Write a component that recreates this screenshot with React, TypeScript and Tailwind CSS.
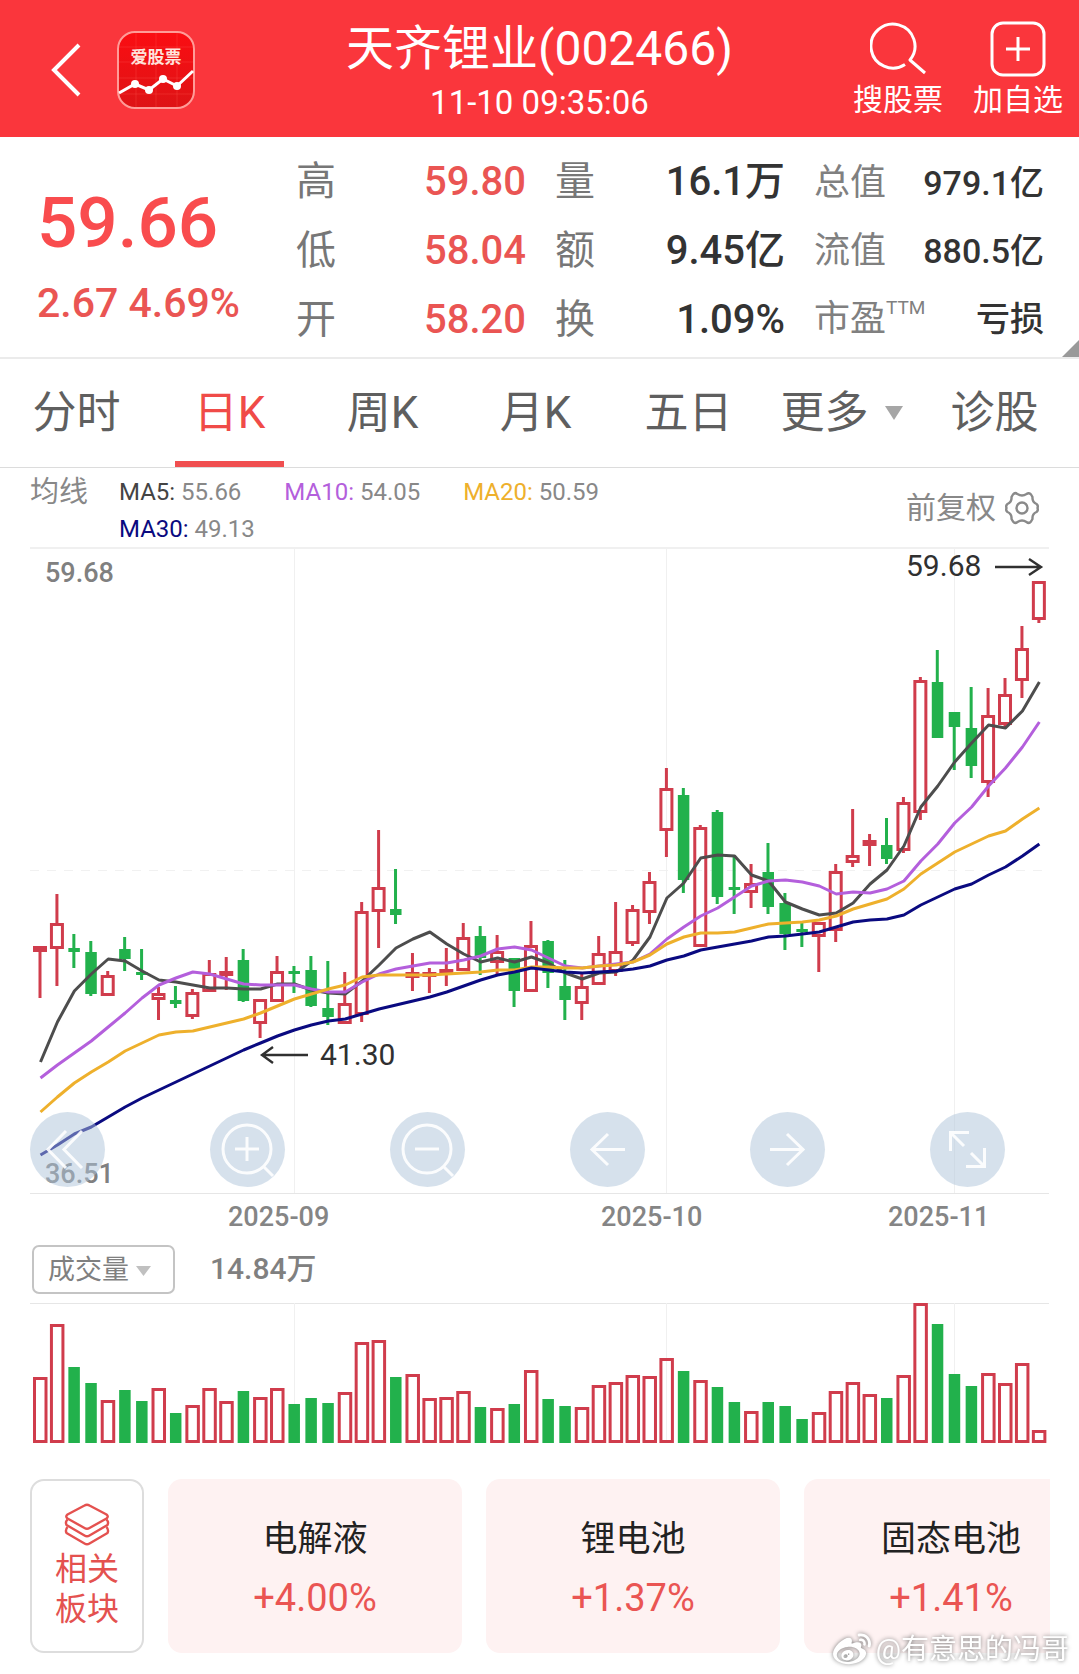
import React from 'react';
import { FaWeibo } from 'react-icons/fa';

interface Candle {
    up: boolean;
    high: number;
    top: number;
    bottom: number;
    low: number;
    volume: number;
}

interface Stat {
    label: string;
    value: string;
    sup?: string;
}

const RED = '#d03c4c';
const GREEN = '#22b14c';
const FIRST_X = 40;
const STEP = 16.93;
const VOLUME_BASE = 1443;

const xAt = (index: number) => FIRST_X + index * STEP;

// up, high, body top, body bottom, low, volume top
const rows: [number, number, number, number, number, number][] = [
    [1, 946, 946, 952, 998, 1377],
    [1, 894, 923, 949, 986, 1324],
    [0, 934, 948, 952, 968, 1367],
    [0, 941, 952, 994, 996, 1383],
    [1, 971, 975, 996, 996, 1400],
    [0, 937, 949, 959, 971, 1390],
    [0, 949, 972, 975, 980, 1401],
    [1, 987, 993, 1000, 1020, 1388],
    [0, 986, 1000, 1004, 1008, 1413],
    [1, 989, 992, 1017, 1019, 1405],
    [1, 960, 973, 992, 992, 1388],
    [1, 957, 971, 976, 990, 1401],
    [0, 949, 960, 1001, 1002, 1391],
    [1, 999, 999, 1024, 1038, 1397],
    [1, 956, 971, 1002, 1002, 1388],
    [0, 966, 971, 974, 993, 1404],
    [0, 956, 970, 1006, 1007, 1398],
    [0, 961, 1008, 1017, 1025, 1403],
    [1, 972, 1003, 1024, 1024, 1392],
    [1, 902, 911, 1015, 1022, 1342],
    [1, 830, 887, 912, 948, 1340],
    [0, 869, 909, 915, 924, 1377],
    [1, 953, 972, 978, 991, 1374],
    [1, 968, 972, 977, 993, 1398],
    [1, 948, 969, 974, 986, 1397],
    [1, 923, 937, 971, 971, 1391],
    [0, 926, 936, 958, 975, 1407],
    [1, 935, 951, 963, 975, 1408],
    [0, 958, 958, 991, 1007, 1404],
    [1, 921, 945, 992, 992, 1370],
    [0, 940, 941, 973, 988, 1399],
    [0, 960, 986, 1000, 1020, 1406],
    [1, 972, 986, 1004, 1020, 1407],
    [1, 936, 953, 985, 985, 1385],
    [1, 902, 951, 972, 976, 1382],
    [1, 905, 909, 944, 946, 1375],
    [1, 872, 881, 913, 924, 1376],
    [1, 768, 788, 831, 857, 1358],
    [0, 788, 795, 880, 893, 1371],
    [1, 825, 827, 947, 947, 1380],
    [0, 810, 812, 897, 904, 1387],
    [0, 857, 887, 890, 914, 1402],
    [1, 864, 883, 893, 908, 1411],
    [0, 843, 872, 907, 914, 1402],
    [0, 893, 903, 934, 950, 1406],
    [0, 922, 929, 932, 947, 1419],
    [1, 922, 922, 937, 972, 1412],
    [1, 864, 871, 931, 942, 1391],
    [1, 809, 855, 863, 867, 1382],
    [1, 834, 840, 846, 866, 1394],
    [0, 818, 845, 859, 864, 1398],
    [1, 797, 802, 851, 853, 1375],
    [1, 677, 680, 813, 820, 1303],
    [0, 650, 682, 738, 738, 1324],
    [0, 712, 712, 727, 770, 1374],
    [0, 687, 728, 766, 778, 1386],
    [1, 688, 715, 783, 797, 1373],
    [1, 678, 694, 725, 727, 1383],
    [1, 626, 648, 681, 698, 1363],
    [1, 581, 581, 620, 623, 1430],
];

const candles: Candle[] = rows.map(([up, high, top, bottom, low, volume]) => ({
    up: up === 1,
    high,
    top,
    bottom,
    low,
    volume,
}));

const averages = [
    {
        color: '#4d4d4d',
        points: [1062, 1022, 991, 974, 959, 961, 971, 980, 982, 985, 988, 988, 989, 989, 984, 984, 990, 993, 994, 981, 965, 948, 939, 932, 944, 954, 962, 958, 962, 957, 963, 973, 979, 973, 972, 960, 937, 898, 883, 858, 855, 856, 875, 881, 902, 909, 915, 913, 903, 884, 870, 846, 807, 786, 762, 743, 725, 728, 711, 682],
    },
    {
        color: '#b45fdc',
        points: [1078, 1065, 1053, 1041, 1027, 1013, 998, 985, 978, 972, 974, 979, 984, 985, 985, 985, 989, 992, 992, 982, 974, 969, 966, 963, 963, 960, 956, 949, 947, 950, 958, 966, 968, 966, 964, 962, 954, 939, 927, 916, 908, 897, 886, 881, 880, 882, 886, 894, 892, 893, 889, 881, 861, 844, 823, 807, 786, 768, 747, 722],
    },
    {
        color: '#eeb02c',
        points: [1112, 1097, 1083, 1072, 1062, 1051, 1043, 1035, 1032, 1031, 1027, 1023, 1019, 1013, 1006, 999, 994, 989, 985, 977, 975, 975, 975, 975, 974, 973, 972, 970, 970, 967, 967, 968, 968, 966, 965, 962, 955, 944, 937, 933, 933, 932, 928, 924, 923, 922, 920, 916, 909, 904, 899, 889, 874, 863, 852, 844, 836, 831, 819, 808],
    },
    {
        color: '#0a0a80',
        points: [1155, 1145, 1134, 1127, 1117, 1107, 1098, 1090, 1082, 1074, 1066, 1058, 1050, 1043, 1036, 1030, 1025, 1021, 1019, 1014, 1009, 1005, 1001, 997, 992, 986, 980, 975, 972, 968, 970, 972, 973, 972, 971, 969, 966, 960, 956, 950, 947, 944, 941, 937, 936, 934, 932, 927, 922, 920, 919, 915, 905, 897, 889, 884, 875, 867, 856, 844],
    },
];

const months = [
    { label: '2025-09', line: 294, x: 228 },
    { label: '2025-10', line: 666, x: 601 },
    { label: '2025-11', line: 954, x: 888 },
];

const priceStats: Stat[] = [
    { label: '高', value: '59.80' },
    { label: '低', value: '58.04' },
    { label: '开', value: '58.20' },
];

const tradeStats: Stat[] = [
    { label: '量', value: '16.1万' },
    { label: '额', value: '9.45亿' },
    { label: '换', value: '1.09%' },
];

const valueStats: Stat[] = [
    { label: '总值', value: '979.1亿' },
    { label: '流值', value: '880.5亿' },
    { label: '市盈', value: '亏损', sup: 'TTM' },
];

const tabs = ['分时', '日K', '周K', '月K', '五日', '更多', '诊股'];

const legend = [
    { name: 'MA5:', value: '55.66', color: 'text-[#444444]' },
    { name: 'MA10:', value: '54.05', color: 'text-[#b45fdc]' },
    { name: 'MA20:', value: '50.59', color: 'text-[#eeb02c]' },
    { name: 'MA30:', value: '49.13', color: 'text-[#0a0a80]' },
];

const tools = [
    { label: '更早', path: 'M36 19 18 37.5 36 56M52 19 34 37.5 52 56' },
    { label: '放大', path: 'M61 37A24 24 0 1 1 13 37A24 24 0 1 1 61 37ZM37 25V49M25 37H49M53 54 63 64' },
    { label: '缩小', path: 'M61 37A24 24 0 1 1 13 37A24 24 0 1 1 61 37ZM25 37H49M53 54 63 64' },
    { label: '左移', path: 'M38 22 22 37.5 38 53M22 37.5H55' },
    { label: '右移', path: 'M37 22 53 37.5 37 53M20 37.5H53' },
    { label: '全屏', path: 'M39 20.5H20.5V39M20.5 20.5 34 34M36 54.5H54.5V36M54.5 54.5 41 41' },
];

const sectors = [
    { name: '电解液', change: '+4.00%' },
    { name: '锂电池', change: '+1.37%' },
    { name: '固态电池', change: '+1.41%' },
];

const Header: React.FC = () => (
    <header className="h-[137px] bg-[#fa363c] text-white grid grid-cols-[1fr_auto_1fr]">
        <div className="flex items-center pt-[2px] pl-[46px] gap-[30px]">
            <button aria-label="返回">
                <svg width="40" height="56" viewBox="0 0 40 56" fill="none" stroke="currentColor" strokeWidth="4">
                    <path d="M33 3 8 28 33 53" />
                </svg>
            </button>
            <svg width="80" height="80" viewBox="0 0 80 80" role="img" aria-label="爱股票">
                <defs>
                    <linearGradient id="logo" x1="0" y1="0" x2="0" y2="1">
                        <stop offset="0" stopColor="#fb0d12" />
                        <stop offset="1" stopColor="#dd1416" />
                    </linearGradient>
                </defs>
                <rect x="2" y="2" width="76" height="76" rx="17" fill="url(#logo)" />
                <path d="M20 3V77M40 3V77M61 3V77M3 17H77M3 32H77M3 48H77M3 64H77" stroke="#ff5a50" strokeOpacity=".3" />
                <rect x="2" y="2" width="76" height="76" rx="17" fill="none" stroke="#ff9c98" strokeWidth="2" />
                <text x="40" y="33" textAnchor="middle" fontSize="17" fontWeight="700" fill="#ffe3dc">爱股票</text>
                <path d="M3 63 19 54 33 60 47 49 61 56 77 41" fill="none" stroke="#fff" strokeWidth="3" />
                <g fill="#fff">
                    <circle cx="19" cy="54" r="4" />
                    <circle cx="33" cy="60" r="4" />
                    <circle cx="47" cy="49" r="4" />
                    <circle cx="61" cy="56" r="4" />
                </g>
            </svg>
        </div>
        <div className="text-center pt-[18px]">
            <h1 className="text-[48px] leading-[61px]">天齐锂业(002466)</h1>
            <p className="text-[33px] leading-[47px]">11-10 09:35:06</p>
        </div>
        <div className="flex justify-end gap-[30px] pr-[16px] pt-[21px] text-[30px] leading-[40px]">
            <button className="flex flex-col items-center gap-[3px]">
                <svg width="56" height="56" viewBox="0 0 56 56" fill="none" stroke="currentColor" strokeWidth="3">
                    <path d="M35 43.500A22 22 0 1 1 40 39L55 52" strokeLinejoin="round" />
                </svg>
                搜股票
            </button>
            <button className="flex flex-col items-center gap-[3px]">
                <svg width="56" height="56" viewBox="0 0 56 56" fill="none" stroke="currentColor" strokeWidth="3">
                    <rect x="2" y="2" width="52" height="52" rx="11" />
                    <path d="M28 16V40M16 28H40" />
                </svg>
                加自选
            </button>
        </div>
    </header>
);

const Quote: React.FC = () => (
    <section className="relative h-[222px] border-b-2 border-[#ebebeb] pl-[37px] pr-[35px] flex justify-between">
        <div className="w-[230px] pt-[46px] text-[#f94c4e] font-medium">
            <div className="text-[71px] leading-[80px]">59.66</div>
            <div className="text-[41px] leading-[48px] pt-[16px] text-[#ea5553] whitespace-nowrap">2.67 4.69%</div>
        </div>
        <dl className="w-[230px] pt-[10px]">
            {priceStats.map((stat) => (
                <div key={stat.label} className="h-[69px] flex items-center justify-between text-[40px]">
                    <dt className="text-[#777777]">{stat.label}</dt>
                    <dd className="text-[#ea5553] font-medium">{stat.value}</dd>
                </div>
            ))}
        </dl>
        <dl className="w-[230px] pt-[10px]">
            {tradeStats.map((stat) => (
                <div key={stat.label} className="h-[69px] flex items-center justify-between text-[40px]">
                    <dt className="text-[#777777]">{stat.label}</dt>
                    <dd className="text-[#333333] font-medium">{stat.value}</dd>
                </div>
            ))}
        </dl>
        <dl className="w-[230px] pt-[12px]">
            {valueStats.map((stat) => (
                <div key={stat.label} className="h-[68px] flex items-center justify-between">
                    <dt className="text-[#808080] text-[36px] flex">
                        {stat.label}
                        {stat.sup && <span className="text-[19px] leading-[32px]">{stat.sup}</span>}
                    </dt>
                    <dd className="text-[#333333] text-[34px] font-medium">{stat.value}</dd>
                </div>
            ))}
        </dl>
        <svg className="absolute right-0 bottom-0" width="17" height="17" viewBox="0 0 17 17">
            <path d="M17 0V17H0Z" fill="#999999" />
        </svg>
    </section>
);

const Tabs: React.FC = () => (
    <nav className="h-[109px] border-b border-[#dcdcdc] grid grid-cols-7 pr-2 text-[44px] text-[#5f5f5f]">
        {tabs.map((tab) => {
            const active = tab === '日K';
            return (
                <button key={tab} className={active ? 'relative text-[#f04b48]' : 'relative'}>
                    <span className="flex items-center justify-center gap-[16px]">
                        {tab}
                        {tab === '更多' && (
                            <svg width="18" height="14" viewBox="0 0 18 14">
                                <path d="M0 0H18L9 14Z" fill="#a6a6a6" />
                            </svg>
                        )}
                    </span>
                    {active && <span className="absolute bottom-0 inset-x-[22px] h-[6px] bg-[#f04f50]" />}
                </button>
            );
        })}
    </nav>
);

const Legend: React.FC = () => (
    <div className="h-[79px] pl-[30px] pr-[40px] flex justify-between text-[#888888]">
        <div className="flex">
            <span className="text-[29px] leading-[48px] w-[89px]">均线</span>
            <ul className="max-w-[600px] flex flex-wrap content-start gap-x-[43px] pt-[6px] text-[24px] leading-[37px]">
                {legend.map((item) => (
                    <li key={item.name}>
                        <span className={item.color}>{item.name}</span> {item.value}
                    </li>
                ))}
            </ul>
        </div>
        <button className="self-center flex items-center gap-[9px] text-[30px]">
            前复权
            <svg width="34" height="34" viewBox="0 0 34 34" fill="none" stroke="#8a8a8a" strokeWidth="2.400">
                <path d="M8 3.500Q10 1 12.500 3Q17 6 21.500 3Q24 1 26 3.500L27.500 6Q27 11 31.500 13Q33.500 14.500 32.500 17Q33.500 19.500 31.500 21Q27 23 27.500 28L26 30.500Q24 33 21.500 31Q17 28 12.500 31Q10 33 8 30.500L6.500 28Q7 23 2.500 21Q.5 19.500 1.500 17Q.5 14.500 2.500 13Q7 11 6.500 6Z" strokeLinejoin="round" />
                <circle cx="17" cy="17" r="5.500" />
            </svg>
        </button>
    </div>
);

const PriceChart: React.FC = () => (
    <div className="relative mx-[30px]">
        <svg className="block w-full h-auto" viewBox="30 547 1019 690">
            <path d="M30 548H1049" stroke="#f0f0f0" strokeWidth="2" />
            <path d="M30 1193.500H1049" stroke="#e6e6e6" />
            <path d="M30 870.500H1049" stroke="#f1f1f1" strokeDasharray="9 8" />
            {months.map((month) => (
                <g key={month.label}>
                    <path d={`M${month.line}.5 548V1193`} stroke="#f0f0f0" />
                    <text x={month.x} y="1226" fontSize="27" fontWeight="500" fill="#858585">{month.label}</text>
                </g>
            ))}
            {candles.map((candle, index) => {
                const x = xAt(index);
                const color = candle.up ? RED : GREEN;
                return (
                    <g key={index}>
                        <path
                            d={`M${x} ${candle.high}V${candle.top}M${x} ${candle.bottom}V${candle.low}`}
                            stroke={color}
                            strokeWidth="3"
                        />
                        {candle.up ? (
                            <rect
                                x={x - 5.5}
                                y={candle.top + 1.5}
                                width="11"
                                height={candle.bottom - candle.top - 3}
                                fill="none"
                                stroke={RED}
                                strokeWidth="3"
                            />
                        ) : (
                            <rect x={x - 5.5} y={candle.top} width="11.500" height={candle.bottom - candle.top} fill={GREEN} />
                        )}
                    </g>
                );
            })}
            {averages.map((line) => (
                <polyline
                    key={line.color}
                    points={line.points.map((y, index) => `${xAt(index) + 0.5},${y}`).join(' ')}
                    fill="none"
                    stroke={line.color}
                    strokeWidth="3"
                    strokeLinejoin="round"
                />
            ))}
            <g fontSize="27" fontWeight="500" fill="#808080">
                <text x="45" y="582">59.68</text>
                <text x="45" y="1183">36.51</text>
            </g>
            <g fontSize="30" fill="#303030">
                <text x="906" y="576">59.68</text>
                <text x="320" y="1065">41.30</text>
            </g>
            <g fill="none" stroke="#303030" strokeWidth="2.400">
                <path d="M995 567H1041M1029 559 1041 567 1029 575" />
                <path d="M308 1055H262M273 1047 262 1055 273 1063" />
            </g>
        </svg>
        <div className="absolute left-0 right-11 bottom-[50px] flex justify-between">
            {tools.map((tool) => (
                <button key={tool.label} aria-label={tool.label} className="size-[75px] rounded-full bg-[#adc4da]/50">
                    <svg viewBox="0 0 75 75" fill="none" stroke="#ffffff" strokeOpacity=".9" strokeWidth="3">
                        <path d={tool.path} />
                    </svg>
                </button>
            ))}
        </div>
    </div>
);

const VolumeChart: React.FC = () => (
    <section className="mx-[30px] pt-[8px]">
        <div className="flex items-center pl-[2px] gap-[35px] text-[#808080]">
            <div className="relative">
                <select
                    aria-label="指标"
                    className="block appearance-none w-[143px] h-[49px] pt-[2px] pl-[14px] border-2 border-[#c4c4c4] rounded-[7px] text-[27px] bg-transparent"
                >
                    <option>成交量</option>
                </select>
                <svg className="absolute right-[24px] top-[21px] pointer-events-none" width="15" height="10" viewBox="0 0 15 10">
                    <path d="M0 0H15L7.500 10Z" fill="#c0c0c0" />
                </svg>
            </div>
            <span className="text-[30px] leading-[46px] pb-[2px] font-medium">14.84万</span>
        </div>
        <svg className="block w-full h-auto mt-[8px]" viewBox="30 1302 1019 142">
            <path d="M30 1303.500H1049" stroke="#e6e6e6" />
            {months.map((month) => (
                <path key={month.label} d={`M${month.line}.5 1303V1443`} stroke="#f0f0f0" />
            ))}
            {candles.map((candle, index) =>
                candle.up ? (
                    <rect
                        key={index}
                        x={xAt(index) - 5.5}
                        y={candle.volume + 1.5}
                        width="11.500"
                        height={VOLUME_BASE - candle.volume - 3}
                        fill="none"
                        stroke={RED}
                        strokeWidth="3"
                    />
                ) : (
                    <rect
                        key={index}
                        x={xAt(index) - 5.5}
                        y={candle.volume}
                        width="11.500"
                        height={VOLUME_BASE - candle.volume}
                        fill={GREEN}
                    />
                ),
            )}
        </svg>
    </section>
);

const Sectors: React.FC = () => (
    <section className="ml-[30px] mr-[29px] mt-[35px] flex gap-[24px] overflow-hidden">
        <button className="shrink-0 w-[114px] h-[174px] border-2 border-[#dddddd] rounded-[14px] text-[#e4514f] text-[32px] leading-[40px] flex flex-col items-center gap-[2px] pt-[22px]">
            <svg width="46" height="44" viewBox="0 0 46 44" fill="none" stroke="currentColor" strokeWidth="2.400" strokeLinejoin="round">
                <path d="M20.500 2.500Q23 1 25.500 2.500L42.500 11.500Q45 13.500 42.500 15.500L25.500 25Q23 26.500 20.500 25L3.500 15.500Q1 13.500 3.500 11.500Z" />
                <path d="M3.500 16.500Q1 19 2.500 22L20.500 32.500Q23 34 25.500 32.500L43.500 22Q45 19 42.500 16.500" />
                <path d="M3.500 24Q1 27 2.500 30L20.500 40.500Q23 42 25.500 40.500L43.500 30Q45 27 42.500 24" />
            </svg>
            <span className="w-[64px]">相关板块</span>
        </button>
        {sectors.map((sector) => (
            <a
                key={sector.name}
                href="#"
                className="shrink-0 w-[294px] h-[174px] rounded-[14px] bg-[#fef2f2] flex flex-col items-center pt-[36px]"
            >
                <span className="text-[35px] leading-[50px] text-[#222222]">{sector.name}</span>
                <span className="text-[38px] leading-[48px] pt-[9px] text-[#ea5553]">{sector.change}</span>
            </a>
        ))}
    </section>
);

const App: React.FC = () => (
    <main className="relative bg-white pb-[21px] overflow-hidden font-['Roboto','Noto_Sans_CJK_SC',sans-serif]">
        <Header />
        <Quote />
        <Tabs />
        <Legend />
        <PriceChart />
        <VolumeChart />
        <Sectors />
        <div className="absolute right-[10px] bottom-[4px] flex items-center gap-[5px] text-white text-[28px] leading-[40px] drop-shadow-[0_0_2px_#777777]">
            <FaWeibo size={38} />
            @有意思的冯哥
        </div>
    </main>
);

export default App;
